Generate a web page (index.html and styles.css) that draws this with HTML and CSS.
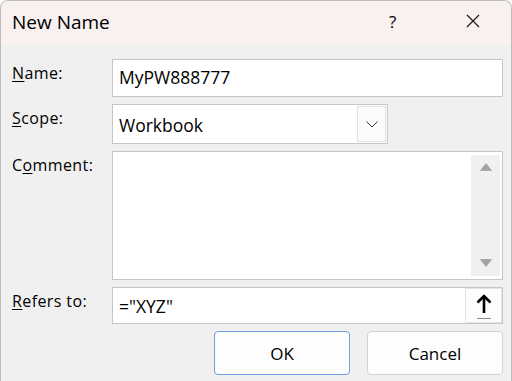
FILE: index.html
```html
<!DOCTYPE html>
<html>
<head>
<meta charset="utf-8">
<link rel="stylesheet" href="styles.css">
</head>
<body>
<div class="window">
  <div class="titlebar">
    <div class="title">New Name</div>
    <div class="help">?</div>
    <div class="close">
      <svg width="14" height="14" viewBox="0 0 14 14"><path d="M1 1 L13 13 M13 1 L1 13" stroke="#1a1a1a" stroke-width="1.2" fill="none"/></svg>
    </div>
  </div>
  <div class="body">
    <div class="row row-name">
      <div class="label"><u>N</u>ame:</div>
      <div class="field input">MyPW888777</div>
    </div>
    <div class="row row-scope">
      <div class="label"><u>S</u>cope:</div>
      <div class="field select">
        <span class="sel-text">Workbook</span>
        <span class="sel-btn">
          <svg width="12" height="7" viewBox="0 0 12 7"><path d="M0.5 0.5 L6 6 L11.5 0.5" stroke="#333" stroke-width="1" fill="none"/></svg>
        </span>
      </div>
    </div>
    <div class="row row-comment">
      <div class="label">C<u>o</u>mment:</div>
      <div class="field textarea">
        <div class="text-area"></div>
        <div class="scrollbar">
          <svg width="12" height="8" viewBox="0 0 12 8"><path d="M6 0.5 L11.5 7.5 L0.5 7.5 Z" fill="#a3a3a3" stroke="#a3a3a3" stroke-width="0.8" stroke-linejoin="round"/></svg>
          <svg width="12" height="8" viewBox="0 0 12 8"><path d="M6 7.5 L11.5 0.5 L0.5 0.5 Z" fill="#a3a3a3" stroke="#a3a3a3" stroke-width="0.8" stroke-linejoin="round"/></svg>
        </div>
      </div>
    </div>
    <div class="row row-refers">
      <div class="label"><u>R</u>efers to:</div>
      <div class="field refers">
        <span class="ref-text">="XYZ"</span>
        <span class="ref-btn">
          <svg width="18" height="26" viewBox="0 0 18 26"><path d="M9 2 L9 19 M2.5 8.5 L9 2 L15.5 8.5" stroke="#000" stroke-width="2.6" fill="none" stroke-linejoin="miter"/><path d="M2 24.5 L16 24.5" stroke="#8a8a8a" stroke-width="1"/></svg>
        </span>
      </div>
    </div>
    <div class="buttons">
      <div class="btn btn-ok">OK</div>
      <div class="btn">Cancel</div>
    </div>
  </div>
</div>
</body>
</html>
```
FILE: styles.css
```css
html, body {
  margin: 0;
  padding: 0;
  background: #ffffff;
}
body {
  font-family: "Open Sans", "Noto Sans", sans-serif;
  color: #000;
  overflow: hidden;
}
.window {
  width: 510px;
  height: 390px;
  border: 1px solid #bdbdbd;
  border-bottom: none;
  border-radius: 8px 8px 0 0;
  background: #f0f0f0;
  overflow: hidden;
}
.titlebar {
  height: 44px;
  background: #f8f1ef;
  display: flex;
  align-items: center;
}
.title {
  font-size: 19px;
  padding-left: 11px;
  flex: 1;
  padding-bottom: 2px;
}
.help {
  font-size: 17px;
  width: 16px;
  margin-right: 61px;
  padding-bottom: 4px;
}
.close {
  width: 14px;
  height: 14px;
  margin-right: 31px;
  margin-bottom: 4px;
  display: flex;
}
.body {
  padding: 14px 8px 0 11px;
  display: flex;
  flex-direction: column;
  gap: 7px;
}
.row {
  display: grid;
  grid-template-columns: 100px 391px;
}
.label {
  font-size: 16px;
  padding-top: 3px;
  letter-spacing: 0.4px;
}
.label u {
  text-decoration-thickness: 1px;
  text-underline-offset: 2px;
}
.field {
  background: #fff;
  border: 1px solid #c6c6c6;
  box-sizing: border-box;
  font-size: 17.5px;
}
.input {
  height: 38px;
  padding: 5px 0 0 6px;
}
.select {
  width: 276px;
  height: 40px;
  display: flex;
  align-items: center;
  justify-content: space-between;
  padding: 1px 1px 1px 6px;
}
.sel-text {
  padding-top: 1px;
}
.sel-btn {
  width: 29px;
  height: 36px;
  box-sizing: border-box;
  border: 1px solid #e0e0e0;
  background: #fbfbfb;
  display: flex;
  align-items: center;
  justify-content: center;
}
.textarea {
  height: 129px;
  display: flex;
  padding: 3px 2px 3px 0;
}
.text-area {
  flex: 1;
}
.scrollbar {
  width: 29px;
  background: #f0f0f0;
  display: flex;
  flex-direction: column;
  align-items: center;
  justify-content: space-between;
  padding: 8px 0 9px;
  box-sizing: border-box;
}
.refers {
  height: 37px;
  display: flex;
  align-items: center;
  justify-content: space-between;
  padding: 0 0 0 6px;
}
.ref-btn {
  width: 37px;
  height: 35px;
  box-sizing: border-box;
  border: 1px solid #e3e3e3;
  background: #fdfdfd;
  display: flex;
  align-items: center;
  justify-content: center;
  padding-top: 2px;
}
.buttons {
  display: flex;
  justify-content: flex-end;
  gap: 17px;
}
.btn {
  width: 136px;
  height: 44px;
  box-sizing: border-box;
  border: 1px solid #d3d3d3;
  border-radius: 4px;
  background: #fdfdfd;
  font-size: 17px;
  display: flex;
  align-items: center;
  justify-content: center;
}
.btn-ok {
  border-color: #6f9de0;
}
```
